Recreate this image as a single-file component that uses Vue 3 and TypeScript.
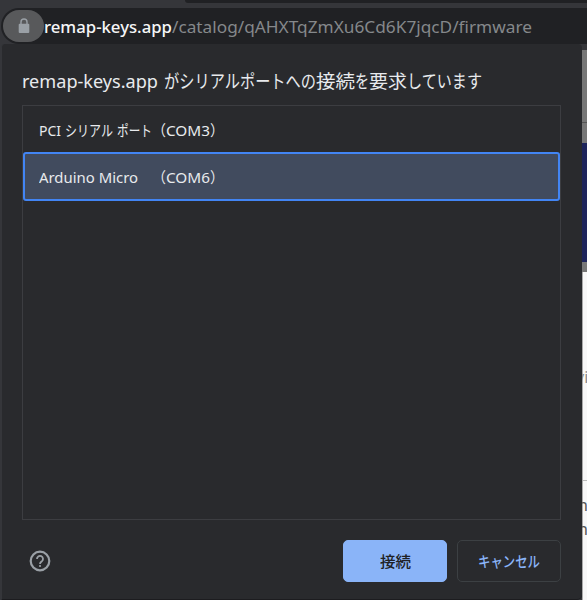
<script setup lang="ts">
interface Segment { text: string; width: number }

const title: Segment[] = [
  { text: 'remap-keys.app', width: 136 },
  { text: 'がシリアルポートへの', width: 152 },
  { text: '接続', width: 39 },
  { text: 'を', width: 14 },
  { text: '要求', width: 38 },
  { text: 'しています', width: 75 },
]

const ports: { selected: boolean; parts: Segment[] }[] = [
  {
    selected: false,
    parts: [
      { text: 'PCI', width: 22 },
      { text: 'シリアル', width: 48 },
      { text: 'ポート', width: 35 },
      { text: '（', width: 14 },
      { text: 'COM3', width: 44 },
      { text: '）', width: 14 },
    ],
  },
  {
    selected: true,
    parts: [
      { text: 'Arduino Micro', width: 99 },
      { text: '（', width: 14 },
      { text: 'COM6', width: 44 },
      { text: '）', width: 14 },
    ],
  },
]

// Condenses or widens a run of text to a given advance width.
const vFit = {
  mounted(el: HTMLElement, binding: { value: number }) {
    const natural = el.getBoundingClientRect().width
    el.style.transform = `scaleX(${binding.value / natural})`
    el.style.marginRight = `${binding.value - natural}px`
  },
}
</script>

<template>
  <div class="screen">
    <div class="tabs"><div class="tabs-edge"></div></div>
    <header class="address">
      <span class="lock">
        <svg width="12" height="16" viewBox="0 0 12 16">
          <path d="M3 6V4a3 3 0 0 1 6 0v2" fill="none" stroke="#9aa0a6" stroke-width="1.4" />
          <rect x="0.7" y="5.7" width="10.6" height="9.3" rx="1" fill="#9aa0a6" />
        </svg>
      </span>
      <span v-fit="128" class="fit host">remap-keys.app</span>
      <span v-fit="360" class="fit path">/catalog/qAHXTqZmXu6Cd6K7jqcD/firmware</span>
    </header>
    <main class="body">
      <section class="dialog">
        <h1 class="title">
          <span v-for="(s, i) in title" :key="i" v-fit="s.width" class="fit">{{ s.text }}</span>
        </h1>
        <ul class="list">
          <li v-for="(port, i) in ports" :key="i" class="row" :class="{ selected: port.selected }">
            <span v-for="(s, j) in port.parts" :key="j" v-fit="s.width" class="fit">{{ s.text }}</span>
          </li>
        </ul>
        <footer class="footer">
          <svg class="help" width="22" height="22" viewBox="0 0 22 22">
            <circle cx="11" cy="11" r="9.3" fill="none" stroke="#9aa0a6" stroke-width="2.2" />
            <path d="M8 9a3 3 0 1 1 5 2.1c-1.2 1-2 1.4-2 2.8" fill="none" stroke="#9aa0a6" stroke-width="1.8" />
            <circle cx="11" cy="16" r="1.1" fill="#9aa0a6" />
          </svg>
          <button class="btn primary"><span v-fit="31" class="fit">接続</span></button>
          <button class="btn"><span v-fit="62" class="fit">キャンセル</span></button>
        </footer>
      </section>
      <aside class="page">
        <div class="bar upper"></div>
        <div class="bar lower"></div>
        <div class="navy"></div>
        <div class="bar shade"></div>
        <div class="sheet">
          <span class="peek vi">vi</span>
          <span class="rule"></span>
          <span class="peek n1">n</span>
          <span class="peek n2">n</span>
        </div>
      </aside>
    </main>
  </div>
</template>

<style>
body { background: #35363a; overflow: hidden; }
</style>

<style scoped>
* { box-sizing: border-box; }
.screen {
  width: 587px;
  height: 600px;
  overflow: hidden;
  display: flex;
  flex-direction: column;
  background: #35363a;
  font-family: "Noto Sans", "Noto Sans CJK JP", sans-serif;
  color: #e8eaed;
}
.fit { display: inline-block; white-space: pre; transform-origin: 0 50%; flex: none; }
.tabs { height: 8px; display: flex; justify-content: flex-end; }
.tabs-edge { width: 402px; height: 3px; background: #202124; border-bottom-left-radius: 4px; }
.address {
  height: 36px;
  margin-left: 1px;
  padding: 2px 0 0 2px;
  display: flex;
  align-items: flex-start;
  background: #202124;
  border-radius: 18px 0 0 18px;
  line-height: 33px;
  font-size: 17px;
}
.lock {
  width: 41px;
  height: 32px;
  border-radius: 16px;
  background: #58595b;
  display: flex;
  align-items: center;
  justify-content: center;
  flex: none;
}
.host { color: #f5f6f7; font-weight: 500; }
.path { color: #85888b; }
.body { height: 556px; display: flex; background: #35363a; }
.dialog {
  width: 581px;
  flex: none;
  height: 556px;
  margin-left: 1px;
  padding: 21px 21px 0 20px;
  border-left: 1px solid #35363a;
  border-bottom: 1px solid #1c1c1f;
  background: #292a2d;
  border-radius: 4px 4px 5px 0;
}
.title {
  margin: 0;
  height: 40px;
  display: flex;
  line-height: 32px;
  font-size: 18.5px;
  font-weight: 400;
}
.title .fit:nth-child(2) { margin-left: 6px; }
.list {
  list-style: none;
  margin: 0;
  padding: 0;
  height: 415px;
  border: 1px solid #3c3d41;
}
.row {
  height: 46px;
  padding: 1px 0 0 16px;
  display: flex;
  align-items: center;
  font-size: 15px;
  line-height: 20px;
}
.row .fit:nth-child(2) { margin-left: 4px; }
.row:first-child .fit:nth-child(3) { margin-left: 4px; }
.row.selected {
  height: 49px;
  padding: 0 0 0 14px;
  border: 2px solid #4285f4;
  border-radius: 3px;
  background: #414b5e;
}
.row.selected .fit:nth-child(2) { margin-left: 14px; }
.footer { height: 82px; display: flex; align-items: center; gap: 10px; }
.help { margin: 0 auto 0 7px; }
.btn {
  width: 104px;
  height: 42px;
  padding: 0;
  border: 1px solid #3c4043;
  border-radius: 5px;
  background: transparent;
  color: #8ab4f8;
  font: 500 15px/20px "Noto Sans CJK JP", sans-serif;
}
.btn.primary { background: #8ab4f8; border-color: #8ab4f8; color: #202124; }
.page { width: 5px; overflow: hidden; padding-top: 6px; }
.bar { background: #777; }
.upper { height: 73px; border-bottom: 1px solid #555; }
.lower { height: 20px; }
.navy { height: 119px; background: #1d245b; }
.shade { height: 10px; }
.sheet { position: relative; height: 328px; background: #f8f8f8; border-left: 1px solid #aaa; }
.peek { position: absolute; font-size: 16px; line-height: 20px; color: #555; }
.vi { left: -7px; top: 95px; color: #888; }
.n1 { left: -5px; top: 223px; }
.n2 { left: -5px; top: 247px; }
.rule { position: absolute; top: 208px; left: 0; width: 5px; height: 1px; background: #bbb; }
</style>
